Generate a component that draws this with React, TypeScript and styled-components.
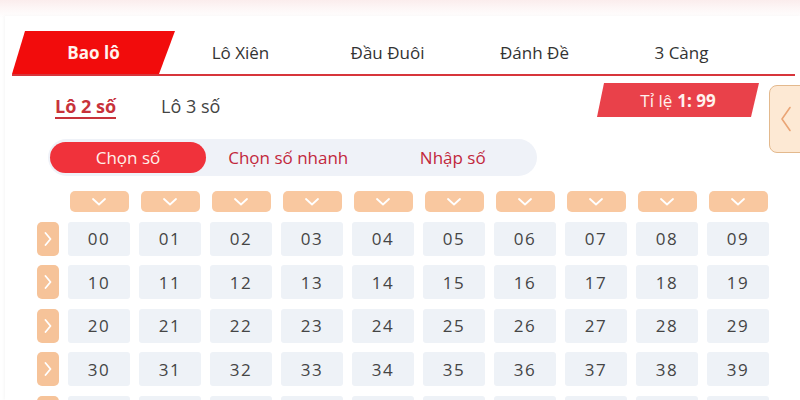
import React, { useState } from "react";
import styled, { createGlobalStyle } from "styled-components";

const GlobalStyle = createGlobalStyle`
  html, body {
    margin: 0;
    padding: 0;
    background: #ffffff;
  }
  body {
    font-family: "Open Sans", "Noto Sans", sans-serif;
  }
`;

const TABS = ["Bao lô", "Lô Xiên", "Đầu Đuôi", "Đánh Đề", "3 Càng"];
const SUB_TABS = ["Lô 2 số", "Lô 3 số"];
const MODES = ["Chọn số", "Chọn số nhanh", "Nhập số"];

const pad = (n: number) => (n < 10 ? `0${n}` : `${n}`);

const DownIcon = () => (
  <svg width="14" height="8" viewBox="0 0 14 8">
    <polyline
      points="1,1 7,6.5 13,1"
      fill="none"
      stroke="#ffffff"
      strokeWidth="1.8"
      strokeLinecap="round"
      strokeLinejoin="round"
    />
  </svg>
);

const RightIcon = () => (
  <svg width="8" height="14" viewBox="0 0 8 14">
    <polyline
      points="1.5,1 6.5,7 1.5,13"
      fill="none"
      stroke="#ffffff"
      strokeWidth="1.8"
      strokeLinecap="round"
      strokeLinejoin="round"
    />
  </svg>
);

const LeftIcon = () => (
  <svg width="12" height="26" viewBox="0 0 12 26">
    <polyline
      points="10,1.5 2,13 10,24.5"
      fill="none"
      stroke="#eaa576"
      strokeWidth="1.6"
      strokeLinecap="round"
      strokeLinejoin="round"
    />
  </svg>
);

export default function App() {
  const [tab, setTab] = useState<number>(0);
  const [subTab, setSubTab] = useState<number>(0);
  const [mode, setMode] = useState<number>(0);

  const rows = Array.from({ length: 10 }, (_, r) => r);
  const cols = Array.from({ length: 10 }, (_, c) => c);

  return (
    <React.Fragment>
      <GlobalStyle />
      <Page>
        <Card>
          <TabBar>
            {TABS.map((t, i) => (
              <Tab key={t} active={tab === i} onClick={() => setTab(i)}>
                <span>{t}</span>
              </Tab>
            ))}
          </TabBar>

          <SubRow>
            <SubTabs>
              {SUB_TABS.map((s, i) => (
                <SubTab
                  key={s}
                  active={subTab === i}
                  onClick={() => setSubTab(i)}
                >
                  {s}
                </SubTab>
              ))}
            </SubTabs>
            <RatioBadge>
              Tỉ lệ <b>1: 99</b>
            </RatioBadge>
          </SubRow>

          <ModeSwitch>
            {MODES.map((m, i) => (
              <ModeButton key={m} active={mode === i} onClick={() => setMode(i)}>
                {m}
              </ModeButton>
            ))}
          </ModeSwitch>

          <NumberGrid>
            <span />
            {cols.map((c) => (
              <ColumnButton key={`h${c}`}>
                <DownIcon />
              </ColumnButton>
            ))}
            {rows.map((r) => (
              <React.Fragment key={`r${r}`}>
                <RowButton>
                  <RightIcon />
                </RowButton>
                {cols.map((c) => (
                  <NumberCell key={c}>{pad(r * 10 + c)}</NumberCell>
                ))}
              </React.Fragment>
            ))}
          </NumberGrid>
        </Card>

        <SideHandle>
          <LeftIcon />
        </SideHandle>
      </Page>
    </React.Fragment>
  );
}

const Page = styled.div`
  position: relative;
  width: 800px;
  height: 400px;
  overflow: hidden;
  background: linear-gradient(to bottom, #fbeded 0px, #fdf6f6 8px, #ffffff 18px);
  box-sizing: border-box;
  padding: 16px 0 0 5px;
`;

const Card = styled.div`
  height: 100%;
  background: #ffffff;
  box-shadow: -1px 0 3px rgba(0, 0, 0, 0.04);
  padding: 15px 0 0 7px;
  box-sizing: border-box;
`;

const TabBar = styled.div`
  display: flex;
  width: 775px;
  height: 43px;
  padding-left: 8px;
  box-sizing: content-box;
  border-bottom: 2px solid #d7353b;
`;

const Tab = styled.div<{ active: boolean }>`
  position: relative;
  width: 147px;
  display: flex;
  align-items: center;
  justify-content: center;
  font-size: 17px;
  color: ${(p) => (p.active ? "#fff3ee" : "#333333")};
  font-weight: ${(p) => (p.active ? 700 : 400)};
  cursor: pointer;

  &::before {
    content: "";
    position: absolute;
    top: 0;
    bottom: 0;
    left: -8px;
    right: -8px;
    background: #f20c0c;
    clip-path: polygon(13px 0, 100% 0, calc(100% - 16px) 100%, 0 100%);
    display: ${(p) => (p.active ? "block" : "none")};
  }

  span {
    position: relative;
  }
`;

const SubRow = styled.div`
  display: flex;
  align-items: flex-start;
  justify-content: space-between;
  width: 747px;
  padding-top: 7px;
`;

const SubTabs = styled.div`
  display: flex;
  gap: 45px;
  padding: 12px 0 0 43px;
`;

const SubTab = styled.div<{ active: boolean }>`
  font-size: 18px;
  line-height: 22px;
  color: ${(p) => (p.active ? "#c8323a" : "#444444")};
  font-weight: ${(p) => (p.active ? 700 : 400)};
  border-bottom: 2px solid ${(p) => (p.active ? "#c8323a" : "transparent")};
  cursor: pointer;
`;

const RatioBadge = styled.div`
  width: 162px;
  height: 34px;
  display: flex;
  align-items: center;
  justify-content: center;
  background: #e9414a;
  color: #fff2ee;
  font-size: 17px;
  clip-path: polygon(7px 0, 100% 0, calc(100% - 8px) 100%, 0 100%);

  b {
    margin-left: 5px;
    font-weight: 700;
  }
`;

const ModeSwitch = styled.div`
  display: grid;
  grid-template-columns: 156px 1fr 1fr;
  width: 489px;
  height: 37px;
  margin: 20px 0 0 36px;
  padding: 3px 2px;
  box-sizing: border-box;
  background: #eff2f8;
  border-radius: 19px;
`;

const ModeButton = styled.div<{ active: boolean }>`
  display: flex;
  align-items: center;
  justify-content: center;
  border-radius: 16px;
  font-size: 17px;
  color: ${(p) => (p.active ? "#fff1ea" : "#c2283c")};
  background: ${(p) => (p.active ? "#f0323b" : "transparent")};
  cursor: pointer;
`;

const NumberGrid = styled.div`
  display: grid;
  grid-template-columns: 22px repeat(10, 62px);
  grid-auto-rows: 34px;
  grid-template-rows: 21px;
  column-gap: 9px;
  row-gap: 9.5px;
  margin: 15px 0 0 25px;
`;

const ColumnButton = styled.div`
  display: flex;
  align-items: center;
  justify-content: center;
  margin: 0 1.5px;
  background: #f9c8a0;
  border-radius: 5px;
  cursor: pointer;
`;

const RowButton = styled.div`
  display: flex;
  align-items: center;
  justify-content: center;
  background: #f6c399;
  border-radius: 5px;
  cursor: pointer;
`;

const NumberCell = styled.div`
  display: flex;
  align-items: center;
  justify-content: center;
  background: #eef2f7;
  border-radius: 3px;
  font-size: 17px;
  letter-spacing: 1.5px;
  color: #454545;
  cursor: pointer;
`;

const SideHandle = styled.div`
  position: absolute;
  top: 85px;
  left: 769px;
  width: 40px;
  height: 68px;
  box-sizing: border-box;
  padding-left: 10px;
  display: flex;
  align-items: center;
  background: #fde9d4;
  border: 1.5px solid #e3b98d;
  border-radius: 8px;
`;
